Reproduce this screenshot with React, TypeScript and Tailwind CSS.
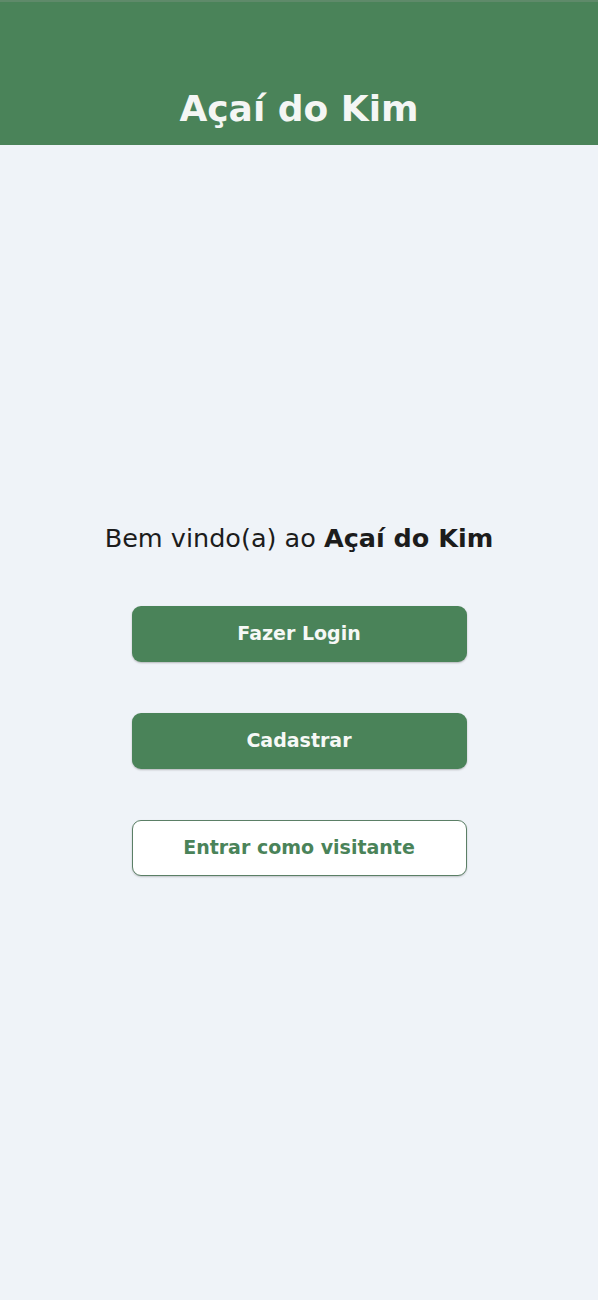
import React from 'react';

export default function App() {
  return (
    <div className="min-h-[1300px] bg-[#eff3f8] flex flex-col" style={{ fontFamily: '"DejaVu Sans", "Noto Sans", sans-serif' }}>
      {/* Header */}
      <header className="h-[145px] bg-[#4a8359] border-t-2 border-[#5f8a6a] flex items-end justify-center pb-[18px]">
        <h1 className="text-[36px] leading-none font-bold text-[#f4f6f4]">Açaí do Kim</h1>
      </header>

      {/* Main */}
      <main className="flex flex-col items-center pt-[381px]">
        <p className="text-[25.5px] leading-none text-[#1c1c1c]">
          Bem vindo(a) ao <span className="font-bold">Açaí do Kim</span>
        </p>

        <div className="flex flex-col gap-[51px] mt-[54px]">
          <button className="w-[335px] h-[56px] rounded-[9px] bg-[#4a8359] text-[#f6f8f6] text-[19px] font-bold shadow-[0_1px_2px_rgba(0,0,0,0.25)]">
            Fazer Login
          </button>
          <button className="w-[335px] h-[56px] rounded-[9px] bg-[#4a8359] text-[#f6f8f6] text-[19px] font-bold shadow-[0_1px_2px_rgba(0,0,0,0.25)]">
            Cadastrar
          </button>
          <button className="w-[335px] h-[56px] rounded-[9px] bg-white border border-[#5b7f66] text-[#4a8359] text-[19px] font-bold shadow-[0_1px_2px_rgba(0,0,0,0.2)]">
            Entrar como visitante
          </button>
        </div>
      </main>
    </div>
  );
}
